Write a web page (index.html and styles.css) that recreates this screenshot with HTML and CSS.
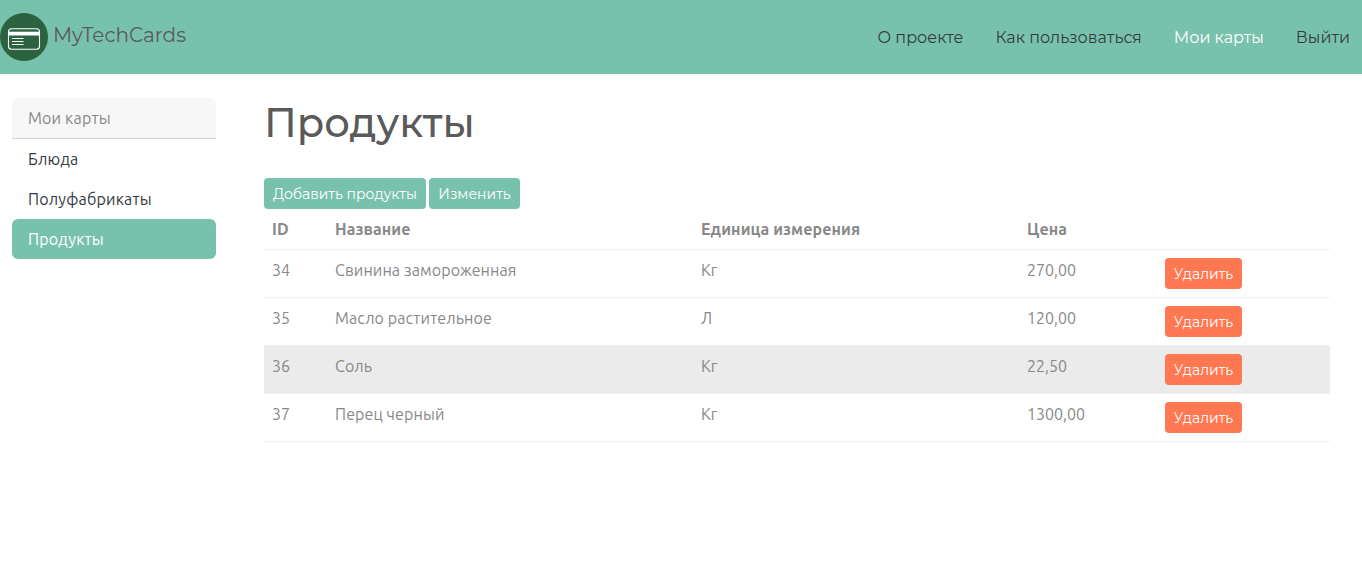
FILE: index.html
```html
<!DOCTYPE html>
<html lang="ru">
<head>
<meta charset="utf-8">
<title>MyTechCards</title>
<link rel="stylesheet" href="styles.css">
</head>
<body>
<header class="navbar">
  <a class="brand">
    <svg class="logo" width="48" height="48" viewBox="0 0 48 48">
      <circle cx="24" cy="24" r="24" fill="#2b6340"/>
      <rect x="8.5" y="15.8" width="31" height="20.4" rx="3" fill="none" stroke="#fff" stroke-width="1.1"/>
      <path d="M8.5 18.7h31v3.8h-31z" fill="#fff"/>
      <path d="M12 25.5h11.5M12 28.5h11.5M12 31.5h11.5" stroke="#fff" stroke-width="1.1"/>
    </svg>
    <span class="brand-name">MyTechCards</span>
  </a>
  <nav class="nav">
    <a class="nav-link">О проекте</a>
    <a class="nav-link">Как пользоваться</a>
    <a class="nav-link active">Мои карты</a>
    <a class="nav-link">Выйти</a>
  </nav>
</header>
<div class="layout">
  <aside class="sidebar">
    <div class="side-head">Мои карты</div>
    <a class="side-item">Блюда</a>
    <a class="side-item">Полуфабрикаты</a>
    <a class="side-item active">Продукты</a>
  </aside>
  <main class="content">
    <h1>Продукты</h1>
    <div class="actions">
      <button class="btn add">Добавить продукты</button>
      <button class="btn edit">Изменить</button>
    </div>
    <table class="table">
      <colgroup><col class="c1"><col class="c2"><col class="c3"><col class="c4"><col class="c5"></colgroup>
      <thead><tr><th>ID</th><th>Название</th><th>Единица измерения</th><th>Цена</th><th></th></tr></thead>
      <tbody>
        <tr><td>34</td><td class="name">Свинина замороженная</td><td>Кг</td><td>270,00</td><td><button class="btn danger">Удалить</button></td></tr>
        <tr><td>35</td><td class="name">Масло растительное</td><td>Л</td><td>120,00</td><td><button class="btn danger">Удалить</button></td></tr>
        <tr class="hover"><td>36</td><td class="name">Соль</td><td>Кг</td><td>22,50</td><td><button class="btn danger">Удалить</button></td></tr>
        <tr><td>37</td><td class="name">Перец черный</td><td>Кг</td><td>1300,00</td><td><button class="btn danger">Удалить</button></td></tr>
      </tbody>
    </table>
  </main>
</div>
</body>
</html>
```
FILE: styles.css
```css
* { box-sizing: border-box; }
body { margin: 0; background: #fff; color: #888; font: 16px/24px Ubuntu, "Noto Sans", sans-serif; }
.navbar { display: flex; align-items: center; justify-content: space-between; height: 74px; background: #78c2ad; padding-right: 12px; font-family: Montserrat, Inter, sans-serif; font-weight: 400; }
.brand { display: flex; gap: 5px; align-items: center; color: #5a5a5a; font-size: 20px; }
.brand-name { padding-bottom: 4px; }
.logo { display: block; }
.nav { display: flex; gap: 32px; padding-top: 2px; }
.nav-link { color: #343a40; white-space: nowrap; }
.nav-link.active { color: #fff; }
.layout { display: flex; padding: 24px 32px 0 12px; gap: 48px; }
.sidebar { width: 204px; flex: none; letter-spacing: .18px; }
.side-head { height: 41px; padding: 8px 16px; background: #f7f7f7; border-bottom: 1px solid #d3d3d3; border-radius: 6px 6px 0 0; }
.side-item { display: block; height: 40px; padding: 8px 16px; color: #343a40; }
.side-item.active { background: #78c2ad; color: #fff; border-radius: 6px; }
.content { flex: 1; }
h1 { margin: 0; height: 80px; padding-top: 1px; font: 500 40px/48px Montserrat, Inter, sans-serif; color: #5a5a5a; }
.actions { display: flex; gap: 3px; }
.btn { height: 31px; padding: 1px 0 0; border: 0; border-radius: 4px; background: #78c2ad; color: #fff; font: 400 14px/21px Montserrat, Inter, sans-serif; white-space: nowrap; }
.add { width: 162px; }
.edit { width: 91px; }
.danger { width: 77px; background: #ff7851; display: block; }
.table { width: 1066px; table-layout: fixed; border-collapse: separate; border-spacing: 0; }
.c1 { width: 63px; } .c2 { width: 366px; } .c3 { width: 326px; } .c4 { width: 138px; }
th, td { padding: 8px; text-align: left; vertical-align: top; border-bottom: 1px solid #f0f0f0; white-space: nowrap; }
th { height: 41px; letter-spacing: .1px; }
td { height: 48px; }
.name { letter-spacing: .1px; }
.hover td { background: #ebebeb; }
```
